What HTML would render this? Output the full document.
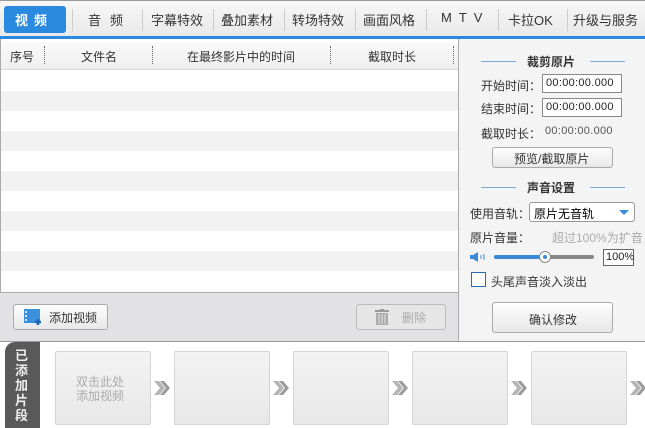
<!DOCTYPE html>
<html><head><meta charset="utf-8"><style>
*{margin:0;padding:0;box-sizing:border-box}
body{width:645px;height:428px;overflow:hidden;background:#fff;font-family:"Liberation Sans","Noto Sans CJK SC",sans-serif;font-size:12px;color:#222;position:relative}
.a{position:absolute}
.tabs{left:0;top:0;width:645px;height:37px;background:linear-gradient(#f7f7f7,#e9e9e9);border-top:1px solid #999}
.tab{position:absolute;top:9px;font-size:13px;color:#333}
.sep{position:absolute;top:8px;width:1px;height:22px;background:#ccc}
.blue{left:0;top:36px;width:645px;height:3px;background:#2a8ae0}
.row{position:absolute;left:1px;width:457px;height:20px}
.inp{position:absolute;width:80px;height:19px;border:1px solid #888;background:#fff;font-size:11px;padding:2px 0 0 3px;font-family:"Liberation Sans",sans-serif;letter-spacing:0.3px}
.btn{position:absolute;border:1px solid #aaa;border-radius:3px;background:linear-gradient(#fdfdfd,#e8e8e8);text-align:center}
.thumb{position:absolute;top:351px;width:96px;height:74px;border:1px solid #d4d4d4;border-radius:2px;background:linear-gradient(#f3f3f3,#e8e8e8)}
.arr{position:absolute;top:380px}
.lab{position:absolute;font-size:12px;color:#333}
</style></head><body>
<div class="a tabs">
 <div class="a" style="left:4px;top:5px;width:62px;height:27px;background:#2a8ae0;border-radius:3px"></div>
 <div class="tab" style="left:15px;color:#fff;font-weight:bold;letter-spacing:6px">视频</div>
 <div class="sep" style="left:72px"></div>
 <div class="tab" style="left:88px;letter-spacing:9px">音频</div>
 <div class="sep" style="left:142px"></div>
 <div class="tab" style="left:151px">字幕特效</div>
 <div class="sep" style="left:213px"></div>
 <div class="tab" style="left:221px">叠加素材</div>
 <div class="sep" style="left:284px"></div>
 <div class="tab" style="left:292px">转场特效</div>
 <div class="sep" style="left:355px"></div>
 <div class="tab" style="left:363px">画面风格</div>
 <div class="sep" style="left:426px"></div>
 <div class="tab" style="left:441px;letter-spacing:7px">MTV</div>
 <div class="sep" style="left:498px"></div>
 <div class="tab" style="left:508px">卡拉OK</div>
 <div class="sep" style="left:567px"></div>
 <div class="tab" style="left:573px">升级与服务</div>
</div>
<div class="a blue"></div>
<!-- table -->
<div class="a" style="left:0;top:39px;width:459px;height:254px;border:1px solid #aaa;border-top:0;background:#fff"></div>
<div class="a" style="left:1px;top:42px;width:457px;height:28px;background:linear-gradient(#fafafa,#efefef);border-bottom:1px solid #d8d8d8"></div>
<div class="lab" style="left:10px;top:48px">序号</div>
<div class="a" style="left:44px;top:46px;height:18px;border-left:1px dotted #666"></div>
<div class="lab" style="left:81px;top:48px">文件名</div>
<div class="a" style="left:152px;top:46px;height:18px;border-left:1px dotted #666"></div>
<div class="lab" style="left:187px;top:48px">在最终影片中的时间</div>
<div class="a" style="left:330px;top:46px;height:18px;border-left:1px dotted #666"></div>
<div class="lab" style="left:368px;top:48px">截取时长</div>
<div class="a" style="left:453px;top:46px;height:18px;border-left:1px dotted #666"></div>
<div class="row" style="top:91px;background:#f2f2f2"></div>
<div class="row" style="top:131px;background:#f2f2f2"></div>
<div class="row" style="top:171px;background:#f2f2f2"></div>
<div class="row" style="top:211px;background:#f2f2f2"></div>
<div class="row" style="top:251px;background:#f2f2f2"></div>
<!-- bottom toolbar -->
<div class="a" style="left:0;top:293px;width:459px;height:48px;background:#e2e2e4;border-right:1px solid #aaa"></div>
<div class="btn" style="left:13px;top:304px;width:95px;height:26px"></div>
<svg class="a" style="left:24px;top:309px" width="20" height="17"><rect x="0" y="0" width="16" height="14" fill="#3a90dc"/><rect x="1" y="2" width="2" height="2" fill="#cfe6fa"/><rect x="1" y="6" width="2" height="2" fill="#cfe6fa"/><rect x="1" y="10" width="2" height="2" fill="#cfe6fa"/><path d="M14 10v6M11 13h6" stroke="#1a66b8" stroke-width="2.5"/></svg>
<div class="lab" style="left:49px;top:309px">添加视频</div>
<div class="btn" style="left:356px;top:304px;width:90px;height:26px;border-color:#bbb;background:#e6e6e6"></div>
<svg class="a" style="left:374px;top:309px" width="16" height="16"><rect x="1" y="1" width="14" height="2" fill="#999"/><rect x="6" y="0" width="4" height="2" fill="#999"/><rect x="2" y="4" width="12" height="12" fill="#aaa"/><path d="M5 5v10M8 5v10M11 5v10" stroke="#e6e6e6" stroke-width="1"/></svg>
<div class="lab" style="left:402px;top:309px;color:#aaa">删除</div>
<!-- right panel -->
<div class="a" style="left:459px;top:39px;width:186px;height:302px;background:#f4f4f4"></div>
<div class="a" style="left:481px;top:61px;width:35px;height:1px;background:#7aaad8"></div>
<div class="a" style="left:590px;top:61px;width:35px;height:1px;background:#7aaad8"></div>
<div class="lab" style="left:527px;top:53px;font-weight:bold">裁剪原片</div>
<div class="lab" style="left:481px;top:77px">开始时间：</div>
<div class="inp" style="left:542px;top:74px">00:00:00.000</div>
<div class="lab" style="left:481px;top:100px">结束时间：</div>
<div class="inp" style="left:542px;top:98px">00:00:00.000</div>
<div class="lab" style="left:481px;top:125px">截取时长：</div>
<div class="a" style="left:545px;top:125px;font-size:11px;color:#555;letter-spacing:0.3px">00:00:00.000</div>
<div class="btn" style="left:492px;top:147px;width:121px;height:21px"></div>
<div class="lab" style="left:514px;top:150px">预览/截取原片</div>
<div class="a" style="left:481px;top:187px;width:35px;height:1px;background:#7aaad8"></div>
<div class="a" style="left:590px;top:187px;width:35px;height:1px;background:#7aaad8"></div>
<div class="lab" style="left:527px;top:179px;font-weight:bold">声音设置</div>
<div class="lab" style="left:470px;top:205px">使用音轨：</div>
<div class="a" style="left:529px;top:202px;width:106px;height:20px;border:1px solid #999;border-radius:3px;background:#fff"></div>
<div class="lab" style="left:534px;top:205px;color:#000">原片无音轨</div>
<div class="a" style="left:619px;top:210px;border:5px solid transparent;border-top:5px solid #3a8ad8;border-bottom:0"></div>
<div class="lab" style="left:470px;top:229px">原片音量：</div>
<div class="a" style="left:552px;top:229px;font-size:12px;color:#aaa">超过100%为扩音</div>
<svg class="a" style="left:469px;top:251px" width="18" height="12"><path d="M1 4h3l5-3v10l-5-3H1z" fill="#3a8ad8"/><path d="M12 4v4M15 3v6" stroke="#3a8ad8" stroke-width="1"/></svg>
<div class="a" style="left:494px;top:255px;width:100px;height:4px;border-radius:2px;background:#888"></div>
<div class="a" style="left:494px;top:255px;width:52px;height:4px;border-radius:2px;background:#3a8ad8"></div>
<div class="a" style="left:539px;top:251px;width:12px;height:12px;border-radius:50%;background:#fff;border:1px solid #888"></div>
<div class="a" style="left:543px;top:255px;width:4px;height:4px;border-radius:50%;background:#3a8ad8"></div>
<div class="a" style="left:603px;top:249px;width:31px;height:17px;border:1px solid #666;background:#fff;font-size:11px;padding:1px 0 0 2px">100%</div>
<div class="a" style="left:471px;top:272px;width:15px;height:15px;border:1px solid #2a6ab0;background:#fff"></div>
<div class="lab" style="left:491px;top:273px">头尾声音淡入淡出</div>
<div class="btn" style="left:492px;top:302px;width:121px;height:31px"></div>
<div class="lab" style="left:529px;top:311px">确认修改</div>
<!-- bottom strip -->
<div class="a" style="left:0;top:341px;width:645px;height:1px;background:#999"></div>
<div class="a" style="left:5px;top:342px;width:35px;height:86px;background:#595959;border-radius:10px 0 0 0"></div>
<div class="a" style="left:15px;top:348px;width:16px;color:#eee;font-weight:bold;font-size:13px;line-height:15px">已添加片段</div>
<div class="thumb" style="left:55px"></div>
<div class="a" style="left:76px;top:375px;color:#aaa;font-size:12px;line-height:14px">双击此处<br>添加视频</div>
<div class="thumb" style="left:174px"></div>
<div class="thumb" style="left:293px"></div>
<div class="thumb" style="left:412px"></div>
<div class="thumb" style="left:531px"></div>
<svg class="a" style="left:0;top:380px" width="645" height="16">
<defs><g id="c"><path d="M0 1h5l6 7-6 7H0l6-7z" fill="#b5b5b5"/><path d="M6 1h4l6 7-6 7H6l6-7z" fill="#9a9a9a"/></g></defs>
<use href="#c" x="154"/><use href="#c" x="273"/><use href="#c" x="392"/><use href="#c" x="511"/><use href="#c" x="630"/>
</svg>
</body></html>
